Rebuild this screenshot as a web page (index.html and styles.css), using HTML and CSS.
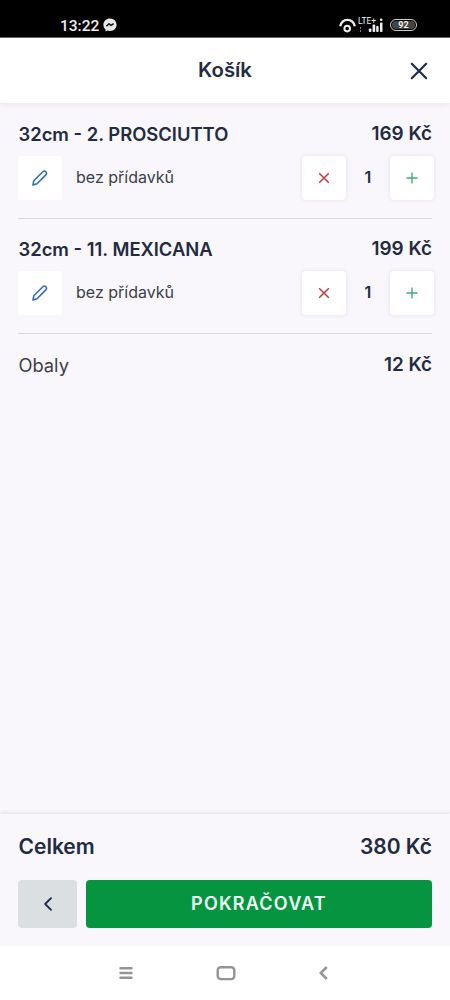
FILE: index.html
```html
<!DOCTYPE html>
<html lang="cs">
<head>
<meta charset="utf-8">
<title>Košík</title>
<link rel="stylesheet" href="styles.css">
</head>
<body>
<div class="phone">
  <div class="status">
    <span class="clock">13:22</span>
    <svg class="messenger" width="14" height="14" viewBox="0 0 14 14"><path fill="#e8e8e8" d="M7 .4C3.200.4.400 3.100.400 6.700c0 2 .8 3.500 2.100 4.700v2.100l2-1c.8.300 1.600.400 2.500.400 3.800 0 6.600-2.700 6.600-6.200S10.800.400 7 .4z"/><path d="M3.400 8.300 6 5.700l2 1.700 2.700-1.800" fill="none" stroke="#111" stroke-width="1.500" stroke-linejoin="round"/></svg>
    <span class="spacer"></span>
    <svg class="hotspot" width="17" height="15" viewBox="0 0 17 15" fill="none" stroke="#eee"><path d="M1.200 8.300C2.200 4.300 5 1.900 8.500 1.900s6.300 2.400 7.300 6.400" stroke-width="2.300"/><circle cx="8.200" cy="10.600" r="2.800" stroke-width="2"/></svg>
    <span class="network">
      <span class="lte">LTE+</span>
      <svg class="bars" width="26" height="16" viewBox="0 0 26 16"><path fill="#777" d="M2 9h1v2H2zm0 3h1v2H2z"/><g fill="#eee"><rect x="10.800" y="10.500" width="2.600" height="3.500" rx=".8"/><rect x="14.600" y="6.500" width="2.600" height="7.500" rx=".8"/><rect x="18.200" y="8" width="2.400" height="6" rx=".8"/><rect x="22" y="4.600" width="2.500" height="9.400" rx=".8"/><circle cx="23.200" cy="1.700" r="1.300"/></g></svg>
    </span>
    <span class="battery"><span class="charge">92</span></span>
  </div>

  <header class="header">
    <h1 class="heading">Košík</h1>
    <svg class="close" width="18" height="18" viewBox="0 0 18 18" fill="none" stroke="#222b47" stroke-width="2.200" stroke-linecap="round"><path d="m1.800 1.800 14.400 14.400M16.200 1.800 1.800 16.200"/></svg>
  </header>

  <main class="cart">
    <section class="item">
      <div class="line"><span>32cm - 2. PROSCIUTTO</span><span class="price">169 Kč</span></div>
      <div class="controls">
        <button class="tile edit"><svg width="16" height="16" viewBox="0 0 16 16" fill="none" stroke="#2f70b8" stroke-width="1.600" stroke-linejoin="round"><path d="M1 15 1.800 10.800 10.600 2c1.100-1.100 2.400-1.200 3.300-.3s.8 2.300-.3 3.400L5 13.700z"/></svg></button>
        <span class="note">bez přídavků</span>
        <button class="tile"><svg width="12" height="12" viewBox="0 0 12 12" stroke="#c63842" stroke-width="1.500"><path d="m1.200 1.200 9.600 9.600M10.800 1.200l-9.600 9.600"/></svg></button>
        <span class="count">1</span>
        <button class="tile"><svg width="12" height="12" viewBox="0 0 12 12" stroke="#3fae79" stroke-width="1.400"><path d="M6 .4v11.200M.4 6h11.200"/></svg></button>
      </div>
    </section>
    <section class="item">
      <div class="line"><span>32cm - 11. MEXICANA</span><span class="price">199 Kč</span></div>
      <div class="controls">
        <button class="tile edit"><svg width="16" height="16" viewBox="0 0 16 16" fill="none" stroke="#2f70b8" stroke-width="1.600" stroke-linejoin="round"><path d="M1 15 1.800 10.800 10.600 2c1.100-1.100 2.400-1.200 3.300-.3s.8 2.300-.3 3.400L5 13.700z"/></svg></button>
        <span class="note">bez přídavků</span>
        <button class="tile"><svg width="12" height="12" viewBox="0 0 12 12" stroke="#c63842" stroke-width="1.500"><path d="m1.200 1.200 9.600 9.600M10.800 1.200l-9.600 9.600"/></svg></button>
        <span class="count">1</span>
        <button class="tile"><svg width="12" height="12" viewBox="0 0 12 12" stroke="#3fae79" stroke-width="1.400"><path d="M6 .4v11.200M.4 6h11.200"/></svg></button>
      </div>
    </section>
    <div class="line packaging"><span class="plain">Obaly</span><span class="price">12 Kč</span></div>
  </main>

  <footer class="summary">
    <div class="total"><span>Celkem</span><span>380 Kč</span></div>
    <div class="actions">
      <button class="back"><svg width="10" height="14" viewBox="0 0 10 14" fill="none" stroke="#222b47" stroke-width="1.900" stroke-linecap="round" stroke-linejoin="round"><path d="M8 1.200 2.200 7 8 12.800"/></svg></button>
      <button class="continue">POKRAČOVAT</button>
    </div>
  </footer>

  <nav class="nav">
    <svg width="14" height="16" viewBox="0 0 14 16" stroke="#949494" stroke-width="2.400" stroke-linecap="round"><path d="M1.500 3.300h11M1.500 8h11M1.500 12.700h11"/></svg>
    <svg width="20" height="16" viewBox="0 0 20 16" fill="none" stroke="#949494" stroke-width="2.400"><rect x="1.700" y="2.300" width="16.600" height="11.800" rx="3"/></svg>
    <svg width="10" height="16" viewBox="0 0 10 16" fill="none" stroke="#949494" stroke-width="2.500"><path d="M8.800 2 2.800 8l6 6"/></svg>
  </nav>
</div>
</body>
</html>
```

FILE: styles.css
```css
* { box-sizing: border-box; }

body {
  margin: 0;
  font-family: Inter, "Liberation Sans", sans-serif;
  color: #222b40;
}

button {
  padding: 0;
  border: 0;
  font: inherit;
}

svg { display: block; flex: none; }

.phone {
  display: flex;
  flex-direction: column;
  width: 450px;
  height: 1000px;
  overflow: hidden;
  background: #f9f7fc;
}

.status {
  display: flex;
  align-items: flex-start;
  flex: none;
  height: 38px;
  padding: 18px 33px 0 60px;
  border-bottom: 1px solid #686868;
  background: #000;
  color: #eee;
}

.clock {
  width: 43px;
  margin-top: -1px;
  font: 500 15.5px/18px Roboto, sans-serif;
}

.spacer { flex: 1; }
.hotspot { margin-right: 2px; }

.network {
  position: relative;
  width: 26px;
  height: 16px;
  margin-right: 6px;
}

.lte {
  position: absolute;
  top: -2px;
  left: 0;
  font: 8.5px/10px Roboto, sans-serif;
}

.battery {
  width: 27px;
  height: 12px;
  margin-top: 1px;
  padding: 1px;
  border: 1px solid #ccc;
  border-radius: 6px;
}

.charge {
  display: block;
  height: 8px;
  border-radius: 4px;
  background: #444;
  font: 700 9px/8px Roboto, sans-serif;
  text-align: center;
}

.header {
  display: grid;
  grid-template-columns: 1fr auto 1fr;
  align-items: center;
  flex: none;
  height: 65px;
  padding: 0 22px;
  background: #fff;
  box-shadow: 0 1px 6px rgba(40, 30, 50, 0.1);
}

.heading {
  grid-column: 2;
  margin: -1px 0 0;
  font-size: 20.3px;
  font-weight: 600;
  line-height: 28px;
}

.close { justify-self: end; }

.cart {
  flex: 1;
  padding: 18px 18px 0;
}

.item {
  height: 115.300px;
}

.line {
  display: flex;
  justify-content: space-between;
  height: 27px;
  padding-left: 0.5px;
  font-size: 18.400px;
  font-weight: 600;
  line-height: 26px;
}

.price { font-size: 18.900px; }

.controls {
  display: flex;
  align-items: center;
  height: 71px;
  padding-bottom: 10px;
  border-bottom: 1px solid #d8d7dc;
}

.tile {
  display: grid;
  place-items: center;
  flex: none;
  width: 44px;
  height: 44px;
  border-radius: 4px;
  background: #fff;
  box-shadow: 0 0 4px rgba(50, 40, 60, 0.12);
}

.tile:last-child { margin-right: -2px; }
.edit { box-shadow: none; }

.note {
  flex: 1;
  padding: 0 0 2px 14px;
  color: #3b3f49;
  font-size: 16px;
}

.count {
  width: 44px;
  padding-bottom: 2px;
  font-size: 16px;
  font-weight: 600;
  text-align: center;
}

.plain {
  color: #3b3f49;
  font-size: 18.3px;
  font-weight: 400;
}

.summary {
  flex: none;
  height: 132.500px;
  padding: 19.500px 18px 0;
  background: #f9f7fc;
  box-shadow: 0 -1px 4px rgba(40, 30, 50, 0.13);
}

.total {
  display: flex;
  justify-content: space-between;
  margin-bottom: 18.500px;
  padding-left: 0.5px;
  font-size: 21px;
  font-weight: 600;
  line-height: 28px;
}

.actions {
  display: flex;
  gap: 9px;
  height: 48.500px;
}

.back {
  display: grid;
  place-items: center;
  width: 59px;
  border-radius: 4px;
  background: #dbdfe2;
}

.continue {
  flex: 1;
  border-radius: 4px;
  background: #069441;
  color: #effff4;
  font-size: 18px;
  font-weight: 600;
  letter-spacing: 1.200px;
}

.nav {
  display: flex;
  align-items: center;
  justify-content: space-between;
  flex: none;
  height: 54px;
  padding: 0 122px 0 119px;
  background: #fff;
}
```
